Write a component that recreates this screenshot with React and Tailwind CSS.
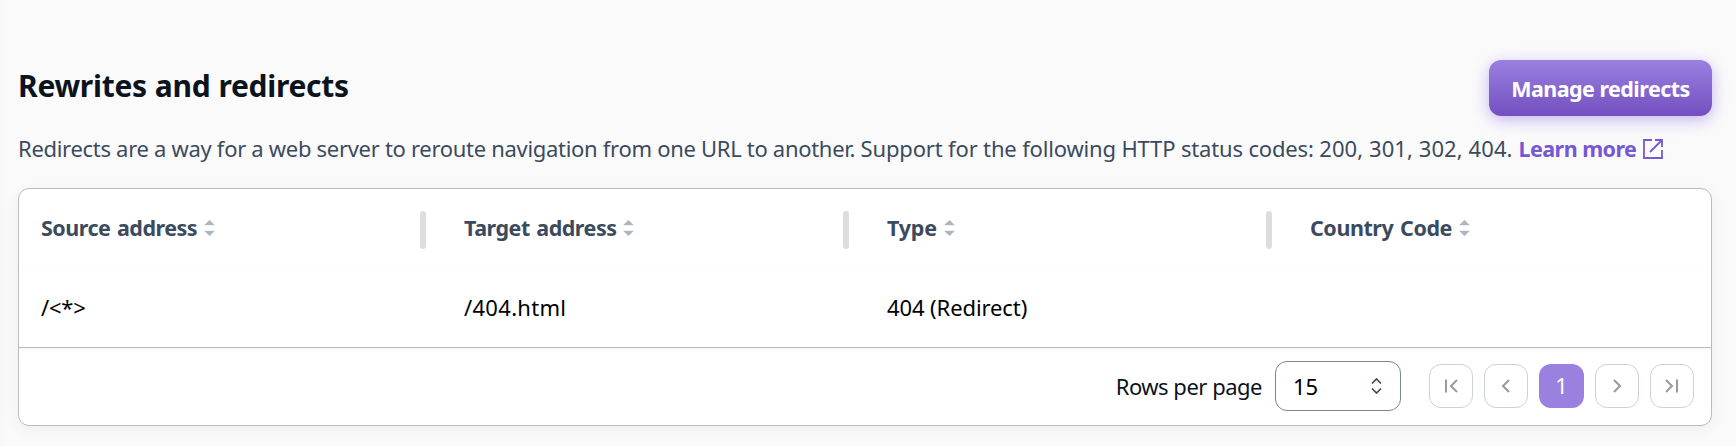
import React from "react";

function SortIcon() {
  return (
    <svg width="11" height="16" viewBox="0 0 11 16" className="block shrink-0">
      <path d="M5.5 0 L10.7 5 H0.3 Z" fill="#afb5bf" />
      <path d="M5.5 16 L10.7 11 H0.3 Z" fill="#afb5bf" />
      <path d="M0.3 5.5 H10.7 M0.3 10.5 H10.7" stroke="#f0f1f3" />
    </svg>
  );
}

function HeaderCell({ children, divider, textClass }) {
  return (
    <div className="flex w-[423px] items-start justify-between pl-[22px] pr-4">
      <div className="flex items-start pt-0.5">
        <span className={`whitespace-nowrap pt-px text-[21.5px] font-bold leading-8 text-[#3b4b5d] [word-spacing:1.5px] ${textClass}`}>{children}</span>
        <span className="ml-[7px] pt-[9px]"><SortIcon /></span>
      </div>
      {divider && <span className="mt-0.5 h-[38px] w-1.5 rounded-full bg-[#dcdddf]" />}
    </div>
  );
}

function BodyCell({ children, textClass }) {
  return (
    <div className="w-[423px] whitespace-nowrap pl-[22px] text-[22px] leading-8 text-black">
      <span className={textClass}>{children}</span>
    </div>
  );
}

function PageButton({ d, label }) {
  return (
    <button aria-label={label} className="flex h-11 w-11 items-center justify-center rounded-xl border border-[#ccd0da] bg-white">
      <svg width="20" height="20" viewBox="0 0 20 20" fill="none" stroke="#999" strokeWidth="2">
        <path d={d} />
      </svg>
    </button>
  );
}

export default function App() {
  return (
    <main className="h-[446px] w-[1736px] overflow-hidden bg-[#fafafa] pl-[18px] pr-6 pt-[60px] font-['Noto_Sans',sans-serif] shadow-[inset_12px_0_12px_-12px_#00000008]">
      <header className="flex h-14 items-start justify-between">
        <h1 className="whitespace-nowrap pt-1.5 text-[30px] font-bold leading-10 tracking-[-0.28px] text-[#0b131c] [word-spacing:0.5px]">Rewrites and redirects</h1>
        <button className="flex h-14 w-[223px] items-center justify-center whitespace-nowrap rounded-xl bg-linear-to-b from-[#9a80df] to-[#744fc0] text-[21.5px] font-bold tracking-[-0.55px] text-white shadow-[0_4px_16px_#b9a5f0cc]">
          <span className="pt-0.5">Manage redirects</span>
        </button>
      </header>
      <p className="mt-4 flex h-8 items-center whitespace-nowrap text-[22px] leading-8 text-[#3b4b5d]">
        <span className="whitespace-pre tracking-[-0.3px]">{"Redirects are a way for a web server to reroute navigation from one URL to another. "}</span>
        <span className="whitespace-pre tracking-[-0.16px]">{"Support for the following HTTP status codes: "}</span>
        <span className="tracking-[0.08px]">200, 301, 302, 404.</span>
        <a className="ml-[6px] pt-px text-[21.5px] font-bold tracking-[-0.55px] text-[#7658d2]">Learn more</a>
        <svg width="20" height="20" viewBox="0 0 20 20" className="ml-[7px] mt-px shrink-0" fill="none" stroke="#7658d2" strokeWidth="1.8">
          <path d="M9 1 H1 V19 H19 V11 M12 1 H19 V8 M19 1 L7 13" />
        </svg>
      </p>
      <section className="mt-6 h-[238px] w-[1694px] overflow-hidden rounded-[11px] border border-[#b9bcc4] bg-white shadow-[0_4px_16px_#0000000d]">
        <div className="flex h-[79px] border-b border-[#fcfcfc] pt-5">
          <HeaderCell divider textClass="tracking-[-0.5px]">Source address</HeaderCell>
          <HeaderCell divider textClass="tracking-[-0.5px]">Target address</HeaderCell>
          <HeaderCell divider textClass="tracking-[-0.2px]">Type</HeaderCell>
          <HeaderCell textClass="tracking-[-0.43px]">Country Code</HeaderCell>
        </div>
        <div className="flex h-[79px] pt-[23px]">
          <BodyCell textClass="tracking-[-0.2px]">/&lt;*&gt;</BodyCell>
          <BodyCell textClass="tracking-[0.3px]">/404.html</BodyCell>
          <BodyCell textClass="tracking-[-0.1px]">404 (Redirect)</BodyCell>
          <BodyCell />
        </div>
        <footer className="flex h-[78px] items-center justify-end border-t border-[#b9bcc4] pb-0.5 pr-[17px] shadow-[inset_0_4px_4px_-2px_#0000000a]">
          <span className="whitespace-nowrap pt-0.5 text-[22px] tracking-[-0.49px] text-[#0b131c]">Rows per page</span>
          <div className="ml-[13px] flex h-[50px] w-[126px] items-center justify-between rounded-xl border border-[#7b8799] pl-[17px] pr-[18px] text-[22px] text-black">
            <span className="pt-0.5">15</span>
            <svg width="11" height="16" viewBox="0 0 11 16" fill="none" stroke="#3b4b5d" strokeWidth="1.7"><path d="M1 5.5 L5.5 1 L10 5.5 M1 10.5 L5.5 15 L10 10.5" /></svg>
          </div>
          <nav className="ml-7 flex gap-[11px]">
            <PageButton label="First page" d="M5 3.5 V16.5 M16 4 L10 10 L16 16" />
            <PageButton label="Previous page" d="M13 4 L7 10 L13 16" />
            <button className="h-11 w-[45px] rounded-xl bg-[#9a80df] text-[22px] text-white">1</button>
            <PageButton label="Next page" d="M7 4 L13 10 L7 16" />
            <PageButton label="Last page" d="M4 4 L10 10 L4 16 M15 3.5 V16.5" />
          </nav>
        </footer>
      </section>
    </main>
  );
}
